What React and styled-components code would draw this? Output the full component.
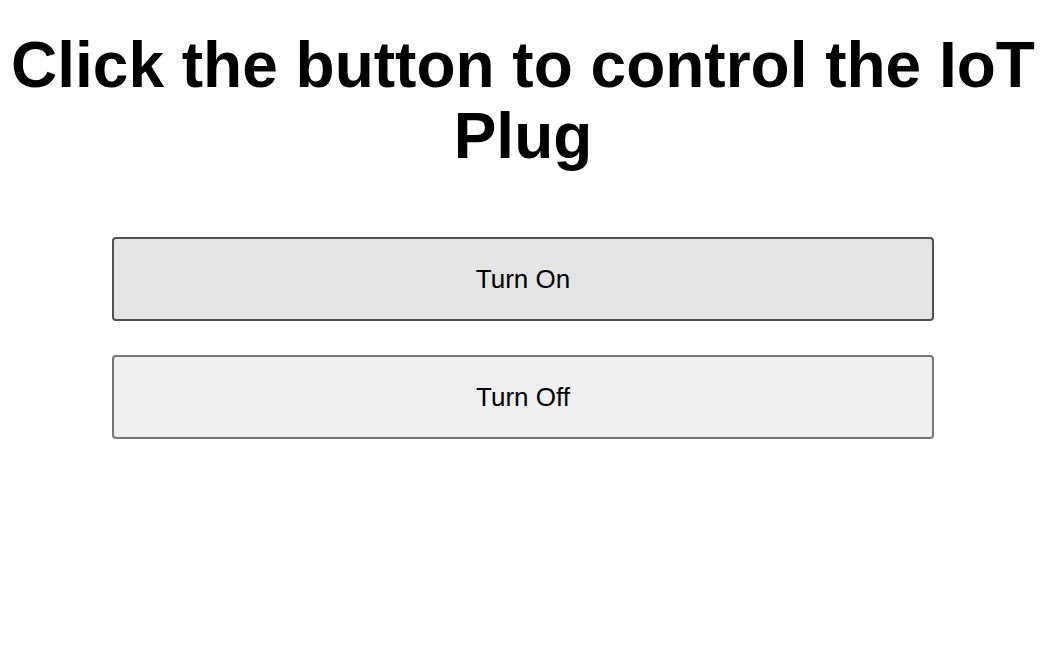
import React from "react";
import styled, { createGlobalStyle } from "styled-components";

const GlobalStyle = createGlobalStyle`
    body {
        margin: 8px;
        background: rgb(255, 255, 255);
        font-family: "Liberation Sans", Arial, sans-serif;
    }
`;

const Page = styled.div`
    display: flex;
    flex-direction: column;
    align-items: center;
`;

const Title = styled.h1`
    font-size: 64px;
    line-height: 71px;
    font-weight: bold;
    text-align: center;
    margin: 22px 0px 65px;
    color: rgb(0, 0, 0);
`;

const Controls = styled.div`
    display: flex;
    flex-direction: column;
    gap: 34px;
    width: 822px;
`;

const Button = styled.button`
    height: 84px;
    width: 100%;
    font-family: "Liberation Sans", Arial, sans-serif;
    font-size: 26px;
    color: rgb(0, 0, 0);
    background: ${(props) => (props.hover ? "rgb(228, 228, 228)" : "rgb(239, 239, 239)")};
    border: 2px solid ${(props) => (props.hover ? "rgb(79, 79, 79)" : "rgb(118, 118, 118)")};
    border-radius: 4px;
    cursor: pointer;
`;

const App = () => {
    return (
        <Page>
            <GlobalStyle />
            <Title>
                Click the button to control the IoT Plug
            </Title>
            <Controls>
                <Button hover>Turn On</Button>
                <Button>Turn Off</Button>
            </Controls>
        </Page>
    );
};

export default App;
